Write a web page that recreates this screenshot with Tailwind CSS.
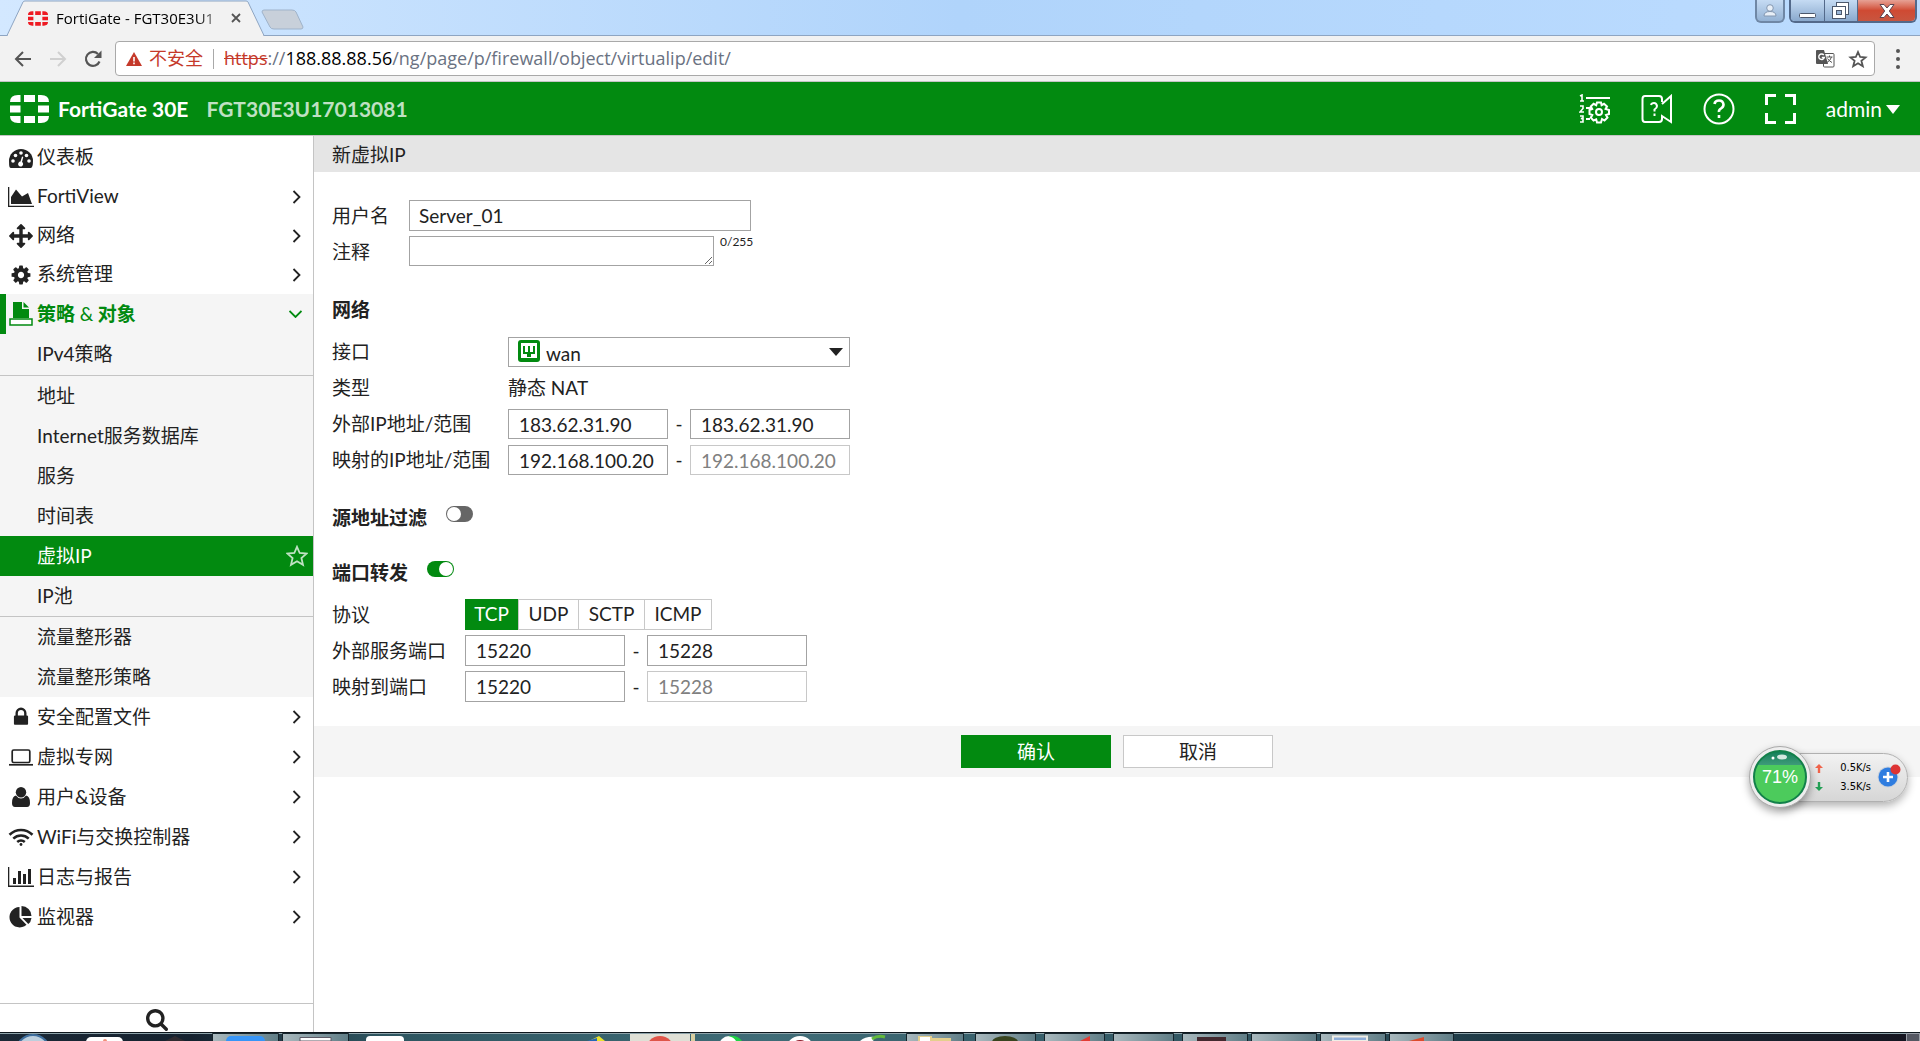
<!DOCTYPE html>
<html lang="zh-CN">
<head>
<meta charset="utf-8">
<title>FortiGate - FGT30E3U17013081</title>
<script src="https://cdn.jsdelivr.net/npm/@tailwindcss/browser@4"></script>
</head>
<body class="h-screen flex flex-col overflow-hidden bg-white text-[#222] font-['Lato','Noto_Sans_CJK_SC',sans-serif]">

<!-- Window title bar with tabs -->
<div class="h-9 shrink-0 flex items-start justify-between bg-linear-to-r from-[#d3e8ff] via-[#b0d4fb] to-[#bcdcff] border-b border-[#8ea5c2] font-['Open_Sans','Noto_Sans_CJK_SC',sans-serif]">
  <div class="flex items-start">
    <div class="relative w-[272px] h-9">
      <svg class="absolute inset-0" width="310" height="36" viewBox="0 0 310 36" aria-hidden="true">
        <path d="M0 35.500H7L23 2Q23.500 1 25 1H246Q247.500 1 248 2L264 35.500" fill="#f2f2f2" stroke="#8ea5c2"/>
        <path d="M8 36H263" stroke="#f2f2f2" stroke-width="2"/>
        <path d="M264 10H292Q295 10 296 12L303 27Q303 29 301 29H274Q271 29 270 27L262 12Q262 10 264 10Z" fill="#c8d0da" stroke="#9fb3ca"/>
      </svg>
      <div class="relative flex items-center h-9 pl-7">
        <svg class="shrink-0" width="20" height="15" viewBox="0 0 39 28" fill="#ee1a22" aria-hidden="true"><path d="M8 0H10.500V7H0Q0 0 8 0ZM14 0H25V7H14ZM28 0H31Q39 0 39 7H28ZM0 10.500H10.500V17.500H0ZM28 10.500H39V17.500H28ZM0 21H10.500V28H8Q0 28 0 21ZM14 21H25V28H14ZM28 21H39Q39 28 31 28H28Z"/></svg>
        <div class="ml-2 w-[175px] whitespace-nowrap text-[15px] text-black mask-r-from-80%">FortiGate - FGT30E3U1</div>
        <button aria-label="关闭标签页"><svg width="10" height="10" viewBox="0 0 10 10" stroke="#555" stroke-width="1.800" fill="none"><path d="M1 1L9 9M9 1L1 9"/></svg></button>
      </div>
    </div>
  </div>
  <div class="flex items-start pr-[3px] gap-1">
    <button class="w-[30px] h-[23px] rounded-b-md border-2 border-t-0 border-[#6f87a5] bg-linear-to-b from-[#c5dbf3] to-[#94b2d4] flex justify-center pt-1" aria-label="用户">
      <svg width="14" height="13" viewBox="0 0 14 13" fill="#e8eff7" stroke="#8497b0"><circle cx="7" cy="4" r="3.300"/><path d="M1 12Q1 7.500 7 7.500T13 12Z"/></svg>
    </button>
    <div class="flex h-[23px] rounded-b-md border-2 border-t-0 border-[#53698a] overflow-hidden">
      <button class="w-[34px] bg-linear-to-b from-[#c5dbf3] to-[#8aa9cd] border-r border-[#53698a] flex justify-center pt-[13px]" aria-label="最小化"><svg width="17" height="5"><rect x=".5" y=".5" width="16" height="4" rx="1" fill="#fff" stroke="#4c586c"/></svg></button>
      <button class="w-[33px] bg-linear-to-b from-[#c5dbf3] to-[#8aa9cd] border-r border-[#53698a] flex justify-center pt-0.5" aria-label="还原"><svg width="18" height="18" fill="#fff" stroke="#4c586c"><rect x="4.500" y=".5" width="12" height="12"/><rect x=".5" y="4.500" width="13" height="12"/><rect x="4.500" y="8.500" width="5" height="4" fill="#9bb6d6"/></svg></button>
      <button class="w-[57px] bg-linear-to-b from-[#e6a195] via-[#cf4a33] to-[#c8553f] flex justify-center pt-1" aria-label="关闭"><svg width="16" height="14" viewBox="0 0 16 14" fill="#fff" stroke="#5a4350"><path d="M1 .5H5L8 4 11 .5H15L10.300 7 15 13.500H11L8 10 5 13.500H1L5.700 7Z"/></svg></button>
    </div>
  </div>
</div>

<!-- Address bar -->
<div class="h-[46px] shrink-0 flex items-center bg-[#f2f2f2] border-b border-[#c4c4c4] pl-[14px] pr-5 font-['Open_Sans','Noto_Sans_CJK_SC',sans-serif]">
  <button aria-label="后退"><svg width="18" height="16" viewBox="0 0 18 16" fill="none" stroke="#555" stroke-width="2"><path d="M17 8H2M9 1L2 8L9 15"/></svg></button>
  <button class="ml-[18px]" aria-label="前进" disabled><svg width="18" height="16" viewBox="0 0 18 16" fill="none" stroke="#d0d0d0" stroke-width="2"><path d="M0 8H15M8 1L15 8L8 15"/></svg></button>
  <button class="ml-4" aria-label="重新加载"><svg width="18" height="18" viewBox="0 0 18 18"><path d="M15.500 11.500A7 7 0 1 1 14 4" fill="none" stroke="#555" stroke-width="2.200"/><path d="M17.500 .5V8H10Z" fill="#555"/></svg></button>
  <div class="ml-[13px] flex-1 h-[35px] flex items-center bg-white border border-[#a9a9a9] rounded-sm px-[10px] text-[18px]">
    <svg width="16" height="14" viewBox="0 0 16 14" aria-hidden="true"><path d="M8 0L16 14H0Z" fill="#c5392a"/><path d="M7.200 5H8.800V9.500H7.200ZM7.200 10.500H8.800V12.200H7.200Z" fill="#fff"/></svg>
    <span class="ml-[7px] text-[#c5392a]">不安全</span>
    <span class="ml-[10px] h-5 border-l border-[#a9a9a9]"></span>
    <span class="ml-[10px] text-gray-500 whitespace-nowrap"><s class="text-[#c5392a]">https</s>://<span class="text-black">188.88.88.56</span>/ng/page/p/firewall/object/virtualip/edit/</span>
    <button class="ml-auto" aria-label="翻译"><svg width="19" height="18" viewBox="0 0 19 18"><rect x="7.500" y="3.500" width="10.500" height="13.500" rx="1" fill="#fff" stroke="#555"/><path d="M10.500 7H16.500M13.500 5.500V7M15.500 7Q14.500 10.500 11 12.500M11.500 8.500Q13 11 16 12.500" stroke="#555" fill="none"/><path d="M1 0H8L12 14H1Q0 14 0 13V1Q0 0 1 0Z" fill="#555"/><path d="M7.800 5A2.800 2.800 0 1 0 8.300 7.500H5.800" fill="none" stroke="#fff" stroke-width="1.400"/></svg></button>
    <button class="ml-[13px] -mr-1" aria-label="加入书签"><svg width="20" height="18" viewBox="0 0 20 18" fill="none" stroke="#555" stroke-width="1.800"><path d="M10 2L12.200 7 17.500 7.400 13.400 10.800 14.800 16.200 10 13.200 5.200 16.200 6.600 10.800 2.500 7.400 7.800 7Z"/></svg></button>
  </div>
  <button class="ml-[21px]" aria-label="菜单"><svg width="4" height="20" fill="#555"><circle cx="2" cy="2" r="2"/><circle cx="2" cy="10" r="2"/><circle cx="2" cy="18" r="2"/></svg></button>
</div>

<!-- Product header -->
<header class="h-[54px] shrink-0 flex items-center bg-[#028a10] border-b border-[#c4c4c4] px-[10px] text-white">
  <svg width="39" height="28" viewBox="0 0 39 28" fill="#fff" aria-hidden="true"><path d="M8 0H10.500V7H0Q0 0 8 0ZM14 0H25V7H14ZM28 0H31Q39 0 39 7H28ZM0 10.500H10.500V17.500H0ZM28 10.500H39V17.500H28ZM0 21H10.500V28H8Q0 28 0 21ZM14 21H25V28H14ZM28 21H39Q39 28 31 28H28Z"/></svg>
  <span class="ml-[9px] text-[21px] font-bold">FortiGate 30E</span>
  <span class="ml-[18px] text-[21px] font-bold text-white/75">FGT30E3U17013081</span>
  <div class="ml-auto flex items-center gap-[30px]">
    <button aria-label="配置步骤"><svg width="32" height="30" viewBox="0 0 32 30" fill="none" stroke="#fff"><g stroke-width="1.600"><path d="M1 2L3 1V7M1 7H5M1 12H4V14.500L1 18H5M1 22H4V24L2 24.500 4 25V28H1"/></g><path d="M7 4H31M7 14H12M7 25H11" stroke-width="2"/><path d="M18 8.500H22L22.600 11.200 25 9.800 28 12.500 26.600 15 30 16V20L27 21 28.500 23.500 25.500 26.500 23 25 22 28.500H18L17.200 25.300 14.500 26.500 11.800 23.700 13.300 21 10.500 20V16L13.200 15 11.800 12.500 14.600 9.800 17.200 11.200Z" stroke-width="2"/><circle cx="20" cy="18" r="3" stroke-width="2"/></svg></button>
    <button aria-label="视频帮助"><svg width="32" height="30" viewBox="0 0 32 30" fill="none" stroke="#fff" stroke-width="2"><path d="M21 8V5Q21 2 18 2H4Q1.500 2 1.500 5V25Q1.500 28 4 28H18Q21 28 21 25V22L30 28V2L21 10" /><path d="M10 11Q10.500 9 13 9T16 12Q16 14 13.500 15.500V17.500M13.500 19.500V22"/></svg></button>
    <button aria-label="帮助"><svg width="32" height="32" viewBox="0 0 32 32" fill="none" stroke="#fff"><circle cx="16" cy="16" r="14.500" stroke-width="2"/><path d="M11.500 11Q12 7.500 16 7.500T20.500 11.500Q20.500 14 18 15.500T16 19M16 22V25" stroke-width="2.600"/></svg></button>
    <button aria-label="全屏"><svg width="31" height="30" viewBox="0 0 31 30" fill="none" stroke="#fff" stroke-width="3"><path d="M1.500 11V1.500H11M20 1.500H29.500V11M29.500 19V28.500H20M11 28.500H1.500V19"/></svg></button>
    <button class="flex items-center gap-1 pr-[10px] text-[21px]">admin<svg class="mt-0.5" width="14" height="9" viewBox="0 0 14 9" fill="#fff"><path d="M0 0H14L7 9Z"/></svg></button>
  </div>
</header>

<div class="flex-1 min-h-0 flex text-[19px]">

  <!-- Navigation -->
  <nav class="w-[314px] shrink-0 flex flex-col border-r border-[#c4c4c4] pt-0.5">
    <a href="#" class="h-[39px] shrink-0 flex items-center pl-2 pr-3">
      <svg class="w-[26px] h-5 mr-[3px]" viewBox="0 0 26 20" aria-hidden="true"><path d="M1.500 19Q1 17 1 13A12 12 0 0 1 25 13Q25 17 24 19Q23.500 20 22.500 20H3Q2 20 1.500 19Z" fill="#222"/><g fill="#fff"><circle cx="5" cy="13" r="1.800"/><circle cx="7.500" cy="7.500" r="1.800"/><circle cx="13" cy="5" r="1.800"/><circle cx="18.500" cy="7.500" r="1.800"/><circle cx="21" cy="13" r="1.800"/><path d="M14 8.500L15.300 9 14 14A2.500 2.500 0 1 1 12.500 13.600Z"/></g></svg>
      仪表板</a>
    <a href="#" class="h-[39px] shrink-0 flex items-center pl-2 pr-3">
      <svg class="w-[26px] h-5 mr-[3px]" viewBox="0 0 26 20" fill="#222" aria-hidden="true"><path d="M.5 0V19.500H26" fill="none" stroke="#222" stroke-width="1.600"/><path d="M3 17V10L8 2.500 14 9.500 20 6 24 17Z"/></svg>
      FortiView<svg class="ml-auto w-[9px] h-[14px]" viewBox="0 0 9 14" fill="none" stroke="#222" stroke-width="1.800"><path d="M1.500 1L7.500 7L1.500 13"/></svg></a>
    <a href="#" class="h-[39px] shrink-0 flex items-center pl-2 pr-3">
      <svg class="w-[26px] h-6 mr-[3px]" viewBox="0 0 1792 1792" fill="#222" aria-hidden="true"><path d="M1792 896q0 26-19 45l-256 256q-19 19-45 19t-45-19-19-45v-128h-384v384h128q26 0 45 19t19 45-19 45l-256 256q-19 19-45 19t-45-19l-256-256q-19-19-19-45t19-45 45-19h128v-384h-384v128q0 26-19 45t-45 19-45-19l-256-256q-19-19-19-45t19-45l256-256q19-19 45-19t45 19 19 45v128h384v-384h-128q-26 0-45-19t-19-45 19-45l256-256q19-19 45-19t45 19l256 256q19 19 19 45t-19 45-45 19h-128v384h384v-128q0-26 19-45t45-19 45 19l256 256q19 19 19 45z"/></svg>
      网络<svg class="ml-auto w-[9px] h-[14px]" viewBox="0 0 9 14" fill="none" stroke="#222" stroke-width="1.800"><path d="M1.500 1L7.500 7L1.500 13"/></svg></a>
    <a href="#" class="h-[39px] shrink-0 flex items-center pl-2 pr-3">
      <svg class="w-[26px] h-[22px] mr-[3px]" viewBox="0 0 1792 1792" fill="#222" aria-hidden="true"><path d="M1152 896q0-106-75-181t-181-75-181 75-75 181 75 181 181 75 181-75 75-181zm512-109v222q0 12-8 23t-20 13l-185 28q-19 54-39 91 35 50 107 138 10 12 10 25t-9 23q-27 37-99 108t-94 71q-12 0-26-9l-138-108q-44 23-91 38-16 136-29 186-7 28-36 28h-222q-14 0-24.500-8.500t-11.500-21.500l-28-184q-49-16-90-37l-141 107q-10 9-25 9-14 0-25-11-126-114-165-168-7-10-7-23 0-12 8-23 15-21 51-66.500t54-70.500q-27-50-41-99l-183-27q-13-2-21-12.500t-8-23.500v-222q0-12 8-23t19-13l186-28q14-46 39-92-40-57-107-138-10-12-10-24 0-10 9-23 26-36 98.500-107.500t94.500-71.500q13 0 26 10l138 107q44-23 91-38 16-136 29-186 7-28 36-28h222q14 0 24.500 8.500t11.500 21.500l28 184q49 16 90 37l142-107q9-9 24-9 13 0 25 10 129 119 165 170 7 8 7 22 0 12-8 23-15 21-51 66.500t-54 70.500q26 50 41 98l183 28q13 2 21 12.500t8 23.500z"/></svg>
      系统管理<svg class="ml-auto w-[9px] h-[14px]" viewBox="0 0 9 14" fill="none" stroke="#222" stroke-width="1.800"><path d="M1.500 1L7.500 7L1.500 13"/></svg></a>

    <div class="shrink-0 bg-[#f5f5f5]">
      <a href="#" class="h-10 flex items-center border-l-6 border-[#028a10] pl-[3px] pr-[11px] font-bold text-[#028a10]">
        <svg class="w-[24px] h-6 mr-1" viewBox="0 0 24 24" fill="#028a10" aria-hidden="true"><path d="M4 0H13V7H20V16H4Z"/><path d="M14.500 0L20 5.500H14.500Z"/><path d="M1 17H23V23H1Z" fill="#fff" stroke="#028a10" stroke-width="1.500"/></svg>
        <span>策略 <span class="font-normal">&amp;</span> 对象</span><svg class="ml-auto w-[13px] h-[8px]" viewBox="0 0 13 8" fill="none" stroke="#028a10" stroke-width="1.800"><path d="M.5 1L6.500 7L12.500 1"/></svg></a>
      <div class="h-[42px] border-b border-[#c4c4c4]"><a href="#" class="h-10 flex items-center pl-[37px]">IPv4策略</a></div>
      <a href="#" class="h-10 flex items-center pl-[37px]">地址</a>
      <a href="#" class="h-10 flex items-center pl-[37px]">Internet服务数据库</a>
      <a href="#" class="h-10 flex items-center pl-[37px]">服务</a>
      <a href="#" class="h-10 flex items-center pl-[37px]">时间表</a>
      <a href="#" class="h-10 flex items-center pl-[37px] pr-[5px] bg-[#028a10] text-white">虚拟IP<svg class="ml-auto w-[22px] h-[22px]" viewBox="0 0 22 22" fill="none" stroke="#fff" stroke-opacity=".75" stroke-width="1.800"><path d="M11 1.800L13.700 8 20.500 8.600 15.400 13 17 19.800 11 16.200 5 19.800 6.600 13 1.500 8.600 8.300 8Z"/></svg></a>
      <div class="border-b border-[#c4c4c4]"><a href="#" class="h-10 flex items-center pl-[37px]">IP池</a></div>
      <a href="#" class="h-10 flex items-center pl-[37px]">流量整形器</a>
      <a href="#" class="h-10 flex items-center pl-[37px]">流量整形策略</a>
    </div>

    <a href="#" class="h-10 shrink-0 flex items-center pl-2 pr-3">
      <svg class="w-[26px] h-[22px] mr-[3px]" viewBox="0 0 1792 1792" fill="#222" aria-hidden="true"><path d="M640 768h512v-192q0-106-75-181t-181-75-181 75-75 181v192zm832 96v576q0 40-28 68t-68 28h-960q-40 0-68-28t-28-68v-576q0-40 28-68t68-28h32v-192q0-184 132-316t316-132 316 132 132 316v192h32q40 0 68 28t28 68z"/></svg>
      安全配置文件<svg class="ml-auto w-[9px] h-[14px]" viewBox="0 0 9 14" fill="none" stroke="#222" stroke-width="1.800"><path d="M1.500 1L7.500 7L1.500 13"/></svg></a>
    <a href="#" class="h-10 shrink-0 flex items-center pl-2 pr-3">
      <svg class="w-[26px] h-[17px] mr-[3px]" viewBox="0 0 26 17" fill="none" stroke="#222" aria-hidden="true"><rect x="4.200" y="1" width="17.600" height="12.500" rx="1.500" stroke-width="1.700"/><path d="M1 15.800H25" stroke-width="1.700"/></svg>
      虚拟专网<svg class="ml-auto w-[9px] h-[14px]" viewBox="0 0 9 14" fill="none" stroke="#222" stroke-width="1.800"><path d="M1.500 1L7.500 7L1.500 13"/></svg></a>
    <a href="#" class="h-10 shrink-0 flex items-center pl-2 pr-3">
      <svg class="w-[26px] h-5 mr-[3px]" viewBox="0 0 26 20" fill="#222" aria-hidden="true"><circle cx="13" cy="5.200" r="5.200"/><path d="M8 8.500Q10 11.500 13 11.500T18 8.500Q22 9 22 16Q22 20 19 20H7Q4 20 4 16Q4 9 8 8.500Z"/></svg>
      用户&amp;设备<svg class="ml-auto w-[9px] h-[14px]" viewBox="0 0 9 14" fill="none" stroke="#222" stroke-width="1.800"><path d="M1.500 1L7.500 7L1.500 13"/></svg></a>
    <a href="#" class="h-10 shrink-0 flex items-center pl-2 pr-3">
      <svg class="w-[26px] h-[18px] mr-[3px]" viewBox="0 0 26 18" fill="none" stroke="#222" stroke-width="2.600" aria-hidden="true"><path d="M1.500 6.800Q6.500 2 13 2T24.500 6.800M5.300 10.600Q8.600 7.500 13 7.500T20.700 10.600M9.200 14Q11 12.500 13 12.500T16.800 14"/><circle cx="13" cy="16.500" r="1.400" fill="#222" stroke="none"/></svg>
      WiFi与交换控制器<svg class="ml-auto w-[9px] h-[14px]" viewBox="0 0 9 14" fill="none" stroke="#222" stroke-width="1.800"><path d="M1.500 1L7.500 7L1.500 13"/></svg></a>
    <a href="#" class="h-10 shrink-0 flex items-center pl-2 pr-3">
      <svg class="w-[26px] h-5 mr-[3px]" viewBox="0 0 26 20" fill="#222" aria-hidden="true"><path d="M.5 0V19.200H26" fill="none" stroke="#222" stroke-width="1.600"/><path d="M5 11H8V17H5ZM10 4H13V17H10ZM15 7H18V17H15ZM20 2H23V17H20Z"/></svg>
      日志与报告<svg class="ml-auto w-[9px] h-[14px]" viewBox="0 0 9 14" fill="none" stroke="#222" stroke-width="1.800"><path d="M1.500 1L7.500 7L1.500 13"/></svg></a>
    <a href="#" class="h-10 shrink-0 flex items-center pl-2 pr-3">
      <svg class="w-[26px] h-[22px] mr-[3px]" viewBox="0 0 26 22" fill="#222" aria-hidden="true"><path d="M11.500 1V11.500L18.500 18.800A10.200 10.200 0 1 1 11.500 1Z"/><path d="M13.500 0A10 10 0 0 1 23.500 10H13.500Z"/><path d="M14.500 12H23.500Q23 16 20.300 18Z"/></svg>
      监视器<svg class="ml-auto w-[9px] h-[14px]" viewBox="0 0 9 14" fill="none" stroke="#222" stroke-width="1.800"><path d="M1.500 1L7.500 7L1.500 13"/></svg></a>

    <button class="mt-auto h-[29px] shrink-0 flex items-center justify-center border-t border-[#c4c4c4] pt-1" aria-label="搜索">
      <svg class="size-[22px]" viewBox="64 128 1664 1664" fill="#222"><path d="M1216 832q0-185-131.500-316.500t-316.500-131.500-316.500 131.500-131.500 316.500 131.500 316.500 316.500 131.500 316.500-131.500 131.500-316.500zm512 832q0 52-38 90t-90 38q-54 0-90-38l-343-342q-179 124-399 124-143 0-273.500-55.500t-225-150-150-225-55.500-273.500 55.500-273.500 150-225 225-150 273.500-55.500 273.500 55.500 225 150 150 225 55.500 273.500q0 220-124 399l343 343q37 37 37 90z"/></svg>
    </button>
  </nav>

  <!-- Virtual IP form -->
  <main class="flex-1 min-w-0">
    <h1 class="h-9 flex items-center bg-[#e5e5e5] pl-[18px] pt-0.5">新虚拟IP</h1>
    <form class="flex flex-col">
      <div class="pl-[18px] pt-7 pb-6">
        <div class="h-9 flex items-start">
          <label for="name" class="w-[77px] leading-8">用户名</label>
          <input id="name" value="Server_01" class="w-[342px] h-[31px] border border-[#a3a3a3] px-[9px]">
        </div>
        <div class="h-9 flex items-start">
          <label for="comment" class="w-[77px] leading-8">注释</label>
          <textarea id="comment" class="w-[305px] h-[30px] border border-[#a3a3a3] px-[9px] resize overflow-hidden"></textarea>
          <span class="ml-[6px] text-xs leading-3">0/255</span>
        </div>

        <h2 class="mt-[22px] h-[42px] leading-8 font-bold">网络</h2>
        <div class="h-9 flex items-start">
          <label for="iface" class="w-[176px] leading-8">接口</label>
          <div class="relative mt-px">
            <select id="iface" class="appearance-none w-[342px] h-[30px] border border-[#a3a3a3] bg-white pl-[37px] pt-0.5"><option>wan</option></select>
            <svg class="absolute left-[10px] top-[3px]" width="22" height="22" viewBox="0 0 22 22" aria-hidden="true"><rect width="22" height="22" rx="3" fill="#028a10"/><rect x="3" y="3" width="16" height="15" fill="#fff"/><path d="M5 6H7V12H10V6H12V12H15V6H17V14H13V17H9V14H5Z" fill="#028a10"/></svg>
            <svg class="absolute right-[7px] top-[11px]" width="14" height="8" viewBox="0 0 14 8" fill="#222" aria-hidden="true"><path d="M0 0H14L7 8Z"/></svg>
          </div>
        </div>
        <div class="h-9 flex items-start leading-8">
          <span class="w-[176px]">类型</span><span>静态 NAT</span>
        </div>
        <div class="h-9 flex items-start">
          <label for="ext1" class="w-[176px] leading-8">外部IP地址/范围</label>
          <input id="ext1" value="183.62.31.90" class="mt-px w-[160px] h-[30px] border border-[#a3a3a3] px-[10px]">
          <span class="w-[22px] text-center leading-8">-</span>
          <input aria-label="外部IP结束" value="183.62.31.90" class="mt-px w-[160px] h-[30px] border border-[#a3a3a3] px-[10px]">
        </div>
        <div class="h-9 flex items-start">
          <label for="map1" class="w-[176px] leading-8">映射的IP地址/范围</label>
          <input id="map1" value="192.168.100.20" class="mt-px w-[160px] h-[30px] border border-[#a3a3a3] px-[10px]">
          <span class="w-[22px] text-center leading-8">-</span>
          <input aria-label="映射IP结束" value="192.168.100.20" disabled class="mt-px w-[160px] h-[30px] border border-[#c8c8c8] px-[10px] text-[#808080]">
        </div>

        <div class="mt-[22px] flex items-start gap-[19px] h-[55px]">
          <label for="srcfilter" class="font-bold leading-8">源地址过滤</label>
          <input id="srcfilter" type="checkbox" class="appearance-none mt-1 w-[27px] h-4 rounded-full bg-[#666] p-px before:block before:size-[14px] before:rounded-full before:bg-white checked:bg-[#028a10] checked:before:ml-[11px]">
        </div>
        <div class="flex items-start gap-[19px] h-[42px]">
          <label for="fwd" class="font-bold leading-8">端口转发</label>
          <input id="fwd" type="checkbox" checked class="appearance-none mt-1 w-[27px] h-4 rounded-full bg-[#666] p-px before:block before:size-[14px] before:rounded-full before:bg-white checked:bg-[#028a10] checked:before:ml-[11px]">
        </div>

        <div class="h-9 flex items-start">
          <span id="proto" class="w-[133px] leading-8">协议</span>
          <div role="radiogroup" aria-labelledby="proto" class="flex h-[31px] border border-l-0 border-[#c8c8c8] divide-x divide-[#c8c8c8]">
            <label class="-my-px h-[31px] w-[54px] flex items-center justify-center bg-[#028a10] text-white"><input type="radio" name="p" checked class="sr-only">TCP</label>
            <label class="w-[60px] flex items-center justify-center"><input type="radio" name="p" class="sr-only">UDP</label>
            <label class="w-[66px] flex items-center justify-center"><input type="radio" name="p" class="sr-only">SCTP</label>
            <label class="w-[66px] flex items-center justify-center"><input type="radio" name="p" class="sr-only">ICMP</label>
          </div>
        </div>
        <div class="h-9 flex items-start">
          <label for="port1" class="w-[133px] leading-8">外部服务端口</label>
          <input id="port1" value="15220" class="w-[160px] h-[31px] border border-[#a3a3a3] px-[10px]">
          <span class="w-[22px] text-center leading-8">-</span>
          <input aria-label="外部端口结束" value="15228" class="w-[160px] h-[31px] border border-[#a3a3a3] px-[10px]">
        </div>
        <div class="h-[31px] flex items-start">
          <label for="port2" class="w-[133px] leading-8">映射到端口</label>
          <input id="port2" value="15220" class="w-[160px] h-[31px] border border-[#a3a3a3] px-[10px]">
          <span class="w-[22px] text-center leading-8">-</span>
          <input aria-label="映射端口结束" value="15228" disabled class="w-[160px] h-[31px] border border-[#c8c8c8] px-[10px] text-[#808080]">
        </div>
      </div>
      <div class="h-[51px] flex items-center justify-center gap-3 bg-[#f5f5f5]">
        <button type="button" class="w-[150px] h-[33px] bg-[#028a10] text-white leading-8">确认</button>
        <button type="button" class="w-[150px] h-[33px] bg-white border border-[#c8c8c8] leading-8">取消</button>
      </div>
    </form>
  </main>
</div>

<!-- Floating network speed widget -->
<div class="absolute right-3 top-[746px] flex items-center h-[62px]">
  <div class="relative z-10 size-[62px] rounded-full border border-[#aaa] bg-[#eee] p-[3px] shadow-[0_4px_8px_rgba(0,0,0,0.35)]">
    <div class="size-full rounded-full border-2 border-[#12804a] bg-linear-to-b from-[#12805a] from-0% via-[#3c9a78] via-25% to-[#4ccb5c] to-25% flex items-center justify-center text-white text-[18px] font-['Liberation_Sans',sans-serif]">71%</div>
    <svg class="absolute left-5 top-[7px]" width="20" height="6" fill="#fff" aria-hidden="true"><circle cx="3" cy="4" r="1.500"/><ellipse cx="12" cy="3" rx="5" ry="2.500" opacity=".8"/></svg>
  </div>
  <div class="-ml-8 w-[129px] h-[49px] rounded-r-full border border-[#b0b0b0] bg-linear-to-b from-[#f2f2f2] to-[#d6d6d6] shadow-[0_4px_8px_rgba(0,0,0,0.3)] flex items-center pl-[35px] pr-1.5">
    <div class="flex flex-col gap-[9px]">
      <svg width="8" height="9" fill="#f0634a" aria-hidden="true"><path d="M4 0L8 4H5.200V9H2.800V4H0Z"/></svg>
      <svg width="8" height="9" fill="#23a055" aria-hidden="true"><path d="M4 9L8 5H5.200V0H2.800V5H0Z"/></svg>
    </div>
    <div class="flex-1 text-right text-[11px] leading-[19px] text-black whitespace-nowrap font-['DejaVu_Sans_Condensed','DejaVu_Sans',sans-serif]">0.5K/s<br>3.5K/s</div>
    <svg class="ml-1.5 -mt-1 shrink-0" width="24" height="26" viewBox="0 0 24 26" aria-hidden="true"><circle cx="11" cy="15" r="10.500" fill="#ccd3dc"/><circle cx="11" cy="15" r="9.500" fill="#2f7de0"/><path d="M11 10V20M6 15H16" stroke="#fff" stroke-width="2.600"/><circle cx="18.500" cy="7.500" r="5" fill="#dd3434"/></svg>
  </div>
</div>

<!-- Taskbar edge -->
<svg class="w-full h-[9px] shrink-0 block" viewBox="0 0 1920 9" preserveAspectRatio="none" aria-hidden="true">
  <defs>
    <linearGradient id="bar"><stop offset="0" stop-color="#1b2936"/><stop offset=".1" stop-color="#15222f"/><stop offset=".2" stop-color="#2d5560"/><stop offset=".4" stop-color="#3f6c77"/><stop offset=".7" stop-color="#2d505c"/><stop offset=".78" stop-color="#1d3844"/><stop offset="1" stop-color="#15141f"/></linearGradient>
    <linearGradient id="btn"><stop offset="0" stop-color="#a9b9be"/><stop offset="1" stop-color="#5f7d86"/></linearGradient>
  </defs>
  <rect width="1920" height="9" fill="url(#bar)"/>
  <path d="M0 1.500H1920" stroke="#8ea3aa"/>
  <path d="M0 .5H1920" stroke="#0d161c"/>
  <g fill="url(#btn)" stroke="#16242b"><path d="M212.500 10V1.500H278.500V10Z"/><path d="M282.500 10V1.500H348.500V10Z"/><path d="M906.500 10V1.500H963.500V10Z"/><path d="M975.500 10V1.500H1035.500V10Z"/><path d="M1044.500 10V1.500H1104.500V10Z"/><path d="M1113.500 10V1.500H1173.500V10Z"/><path d="M1182.500 10V1.500H1247.500V10Z"/><path d="M1251.500 10V1.500H1316.500V10Z"/><path d="M1320.500 10V1.500H1385.500V10Z"/><path d="M1389.500 10V1.500H1453.500V10Z"/></g>
  <rect x="630" y="2" width="60" height="7" fill="#dfe0d6"/><rect x="691" y="2" width="4" height="7" fill="#d9cfa0"/>
  <circle cx="33" cy="20" r="17" fill="#bccfdd" stroke="#3f6f9e" stroke-width="2"/>
  <rect x="86" y="5" width="37" height="12" rx="5" fill="#fff"/><circle cx="105" cy="9" r="2" fill="#f0907a"/>
  <path d="M165 9L175 4L185 9Z" fill="#2f2b30"/>
  <rect x="226" y="4" width="39" height="12" rx="5" fill="#3795f7"/>
  <path d="M300 9V5.500H331V9Z" fill="#fff" stroke="#5d5965"/>
  <rect x="366" y="4" width="38" height="12" rx="4" fill="#fff"/>
  <path d="M589 9L599 4L605 9Z" fill="#e9e32c"/><path d="M587 9L597 6V9Z" fill="#2468b8"/>
  <circle cx="660" cy="18" r="14" fill="#df5549"/>
  <circle cx="729" cy="14" r="10" fill="#fff"/><path d="M728 4Q738 3 742 9H736Q734 5 728 4Z" fill="#1fd345"/>
  <circle cx="800" cy="18" r="12" fill="#8c1a28" stroke="#fff" stroke-width="4"/>
  <path d="M860 9Q866 4 875 5L873 9Z" fill="#fff"/><path d="M872 7Q878 3 885 5" stroke="#62b93c" stroke-width="3" fill="none"/>
  <path d="M918 9V4H932V6H951V9Z" fill="#e4cf8c"/><path d="M920 5H930V9H920Z" fill="#fff"/>
  <ellipse cx="1005" cy="10" rx="13" ry="6" fill="#38441f"/>
  <path d="M1080 9L1090 4V9Z" fill="#e23c34"/>
  <path d="M1197 5H1226V9H1197Z" fill="#43292f"/>
  <path d="M1333 9V4.500H1367V9Z" fill="#8faed8" stroke="#efeee6" stroke-width="2"/>
  <path d="M1409 9L1424 5V9Z" fill="#dd4b2c"/>
  <path d="M1906.500 10V1.500H1919.500V10Z" fill="#545762" stroke="#9a9fa8"/>
</svg>
</body>
</html>
